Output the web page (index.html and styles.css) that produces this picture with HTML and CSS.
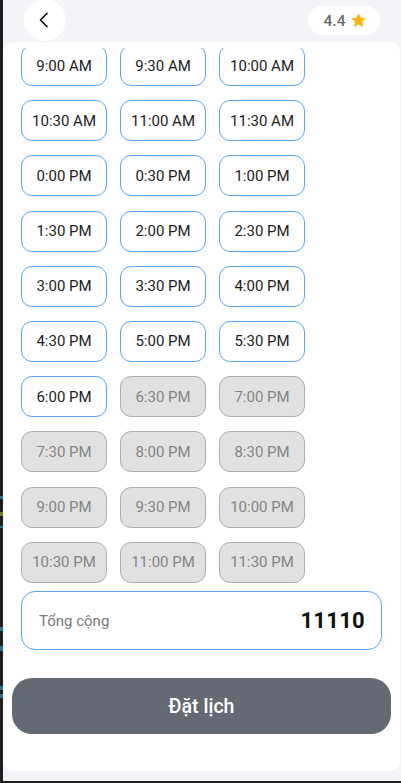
FILE: index.html
```html
<!DOCTYPE html>
<html lang="vi">
<head>
<meta charset="utf-8">
<title>Đặt lịch</title>
<link rel="stylesheet" href="styles.css">
</head>
<body>
<div class="frame">
  <div class="strip"></div>
  <div class="main">
    <header class="topbar">
      <button class="back" aria-label="Quay lại">
        <svg width="16" height="16" viewBox="0 0 16 16"><path d="M11 1.5 L4.5 8 L11 14.5" fill="none" stroke="#111" stroke-width="1.7" stroke-linecap="round" stroke-linejoin="round"/></svg>
      </button>
      <div class="rating">
        <span class="score">4.4</span>
        <svg width="15" height="15" viewBox="0 0 24 24"><path d="M12 1.8l3.1 6.5 7 .9-5.1 4.9 1.3 7-6.3-3.4-6.3 3.4 1.3-7L1.9 9.2l7-.9z" fill="#f7b50c" stroke="#f7b50c" stroke-width="1.5" stroke-linejoin="round"/></svg>
      </div>
    </header>
    <section class="card">
      <div class="scroll">
        <div class="slots">
          <button class="slot">9:00 AM</button>
          <button class="slot">9:30 AM</button>
          <button class="slot">10:00 AM</button>
          <button class="slot">10:30 AM</button>
          <button class="slot">11:00 AM</button>
          <button class="slot">11:30 AM</button>
          <button class="slot">0:00 PM</button>
          <button class="slot">0:30 PM</button>
          <button class="slot">1:00 PM</button>
          <button class="slot">1:30 PM</button>
          <button class="slot">2:00 PM</button>
          <button class="slot">2:30 PM</button>
          <button class="slot">3:00 PM</button>
          <button class="slot">3:30 PM</button>
          <button class="slot">4:00 PM</button>
          <button class="slot">4:30 PM</button>
          <button class="slot">5:00 PM</button>
          <button class="slot">5:30 PM</button>
          <button class="slot">6:00 PM</button>
          <button class="slot off">6:30 PM</button>
          <button class="slot off">7:00 PM</button>
          <button class="slot off">7:30 PM</button>
          <button class="slot off">8:00 PM</button>
          <button class="slot off">8:30 PM</button>
          <button class="slot off">9:00 PM</button>
          <button class="slot off">9:30 PM</button>
          <button class="slot off">10:00 PM</button>
          <button class="slot off">10:30 PM</button>
          <button class="slot off">11:00 PM</button>
          <button class="slot off">11:30 PM</button>
        </div>
      </div>
      <div class="total">
        <span class="total-label">Tổng cộng</span>
        <span class="total-value">11110</span>
      </div>
      <button class="book">Đặt lịch</button>
    </section>
  </div>
</div>
</body>
</html>
```
FILE: styles.css
```css
* { box-sizing: border-box; }
html, body { margin: 0; padding: 0; }
body {
  width: 401px;
  height: 783px;
  overflow: hidden;
  background: #1e1e1e;
  font-family: Roboto, "Noto Sans", Arial, sans-serif;
}
.frame {
  display: flex;
  height: 781px;
}
.strip {
  width: 3px;
  flex: none;
  background:
    linear-gradient(to bottom,
      #1f1f1f 0, #1f1f1f 496px,
      #2f6f96 496px, #2f6f96 499px,
      #1f1f1f 499px, #1f1f1f 512px,
      #6f7d25 512px, #6f7d25 516px,
      #1f1f1f 516px, #1f1f1f 526px,
      #2f6f96 526px, #2f6f96 528px,
      #1f1f1f 528px, #1f1f1f 627px,
      #2f6f96 627px, #2f6f96 631px,
      #1f1f1f 631px, #1f1f1f 646px,
      #2f6f96 646px, #2f6f96 651px,
      #1f1f1f 651px, #1f1f1f 686px,
      #2f6f96 686px, #2f6f96 690px,
      #1f1f1f 690px, #1f1f1f 694px,
      #2f6f96 694px, #2f6f96 698px,
      #1f1f1f 698px);
}
.main {
  flex: 1;
  background: #f3f4f8;
  display: flex;
  flex-direction: column;
}
.topbar {
  height: 42px;
  flex: none;
  display: flex;
  align-items: flex-start;
  justify-content: space-between;
  padding: 0 21px 0 21px;
}
.back {
  width: 42px;
  height: 42px;
  margin-top: -1px;
  border: none;
  border-radius: 50%;
  background: #ffffff;
  display: flex;
  align-items: center;
  justify-content: center;
  padding: 0 2px 0 0;
}
.rating {
  margin-top: 6px;
  width: 72px;
  height: 29px;
  border-radius: 15px;
  background: #ffffff;
  display: flex;
  align-items: center;
  justify-content: center;
  gap: 6px;
  padding-left: 2px;
}
.score {
  font-size: 15.5px;
  font-weight: 500;
  color: #6a6a6a;
}
.card {
  width: 397px;
  height: 729px;
  background: #ffffff;
  border-radius: 9px;
  padding-top: 6px;
  display: flex;
  flex-direction: column;
}
.scroll {
  height: 535px;
  overflow: hidden;
  flex: none;
}
.slots {
  margin-top: -3px;
  padding-left: 18px;
  display: grid;
  grid-template-columns: repeat(3, 86px);
  column-gap: 13px;
  row-gap: 14.2px;
}
.slot {
  height: 41px;
  border: 1px solid #5aa8f5;
  border-radius: 11px;
  background: #ffffff;
  font-family: Roboto, "Noto Sans", Arial, sans-serif;
  font-size: 15px;
  color: #1c1c1c;
  padding: 0;
}
.slot.off {
  background: #e1e1e1;
  border-color: #aeaeae;
  color: #858585;
}
.total {
  margin: 8px 0 0 18px;
  width: 361px;
  height: 59px;
  flex: none;
  border: 1px solid #5aa8f5;
  border-radius: 14px;
  display: flex;
  align-items: center;
  justify-content: space-between;
  padding: 0 16px 0 17px;
}
.total-label {
  font-size: 15px;
  color: #7a7a7a;
}
.total-value {
  font-size: 22px;
  font-weight: 700;
  color: #111111;
  letter-spacing: 0.3px;
}
.book {
  margin: 28px 0 0 9px;
  width: 379px;
  height: 56px;
  flex: none;
  border: none;
  border-radius: 20px;
  background: #646a73;
  color: #ffffff;
  font-family: Roboto, "Noto Sans", Arial, sans-serif;
  font-size: 19.5px;
  font-weight: 500;
}
```
